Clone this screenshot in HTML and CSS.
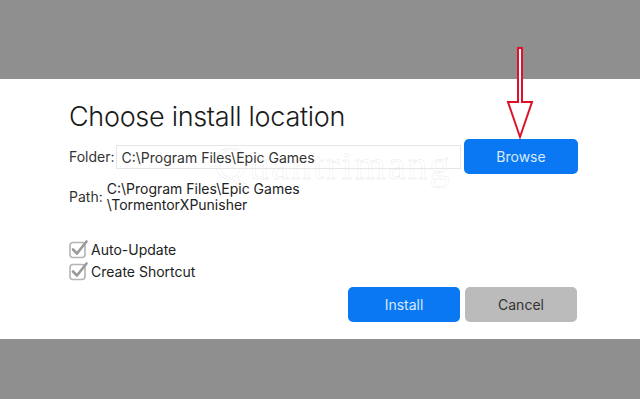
FILE: index.html
```html
<!DOCTYPE html>
<html lang="en">
<head>
  <meta charset="UTF-8">
  <meta name="viewport" content="width=device-width, initial-scale=1.0">
  <title>Choose install location</title>
  <link rel="stylesheet" href="styles.css">
</head>
<body>
  <div class="band top"></div>
  <section class="dialog">
    <h1>Choose install location</h1>
    <div class="row folder">
      <span class="label">Folder:</span>
      <div class="field">C:\Program Files\Epic Games</div>
      <button class="btn primary browse">Browse</button>
    </div>
    <div class="row path">
      <span class="label">Path:</span>
      <div class="value">
        <div>C:\Program Files\Epic Games</div>
        <div>\TormentorXPunisher</div>
      </div>
    </div>
    <ul class="options">
      <li>
        <svg class="check" width="20" height="20" viewBox="0 0 20 20">
          <rect x="1" y="3.5" width="15" height="15" rx="3" fill="none" stroke="#b4b4b4" stroke-width="1.6"/>
          <path d="M4 10.5 L8 14.5 L17.5 2.5" fill="none" stroke="#9a9a9a" stroke-width="2.6" stroke-linecap="round" stroke-linejoin="round"/>
        </svg>
        Auto-Update
      </li>
      <li>
        <svg class="check" width="20" height="20" viewBox="0 0 20 20">
          <rect x="1" y="3.5" width="15" height="15" rx="3" fill="none" stroke="#b4b4b4" stroke-width="1.6"/>
          <path d="M4 10.5 L8 14.5 L17.5 2.5" fill="none" stroke="#9a9a9a" stroke-width="2.6" stroke-linecap="round" stroke-linejoin="round"/>
        </svg>
        Create Shortcut
      </li>
    </ul>
    <div class="actions">
      <button class="btn primary">Install</button>
      <button class="btn cancel">Cancel</button>
    </div>
    <div class="watermark"><span class="mark">Q</span>uantrimang</div>
  </section>
  <div class="band bottom"></div>

  <svg class="arrow" width="30" height="96" viewBox="0 0 30 96">
    <path d="M13 1 L17 1 L17 55 L27 55 L15 90 L3 55 L13 55 Z" fill="#fff" stroke="#e0102a" stroke-width="2" stroke-linejoin="miter"/>
  </svg>
</body>
</html>
```
FILE: styles.css
```css
body {
  margin: 0;
  background: #8f8f8f;
  font-family: "Inter", "Liberation Sans", sans-serif;
  color: #222;
  position: relative;
}
.band.top {
  height: 79px;
}
.band.bottom {
  height: 60px;
}
.dialog {
  position: relative;
  background: #fff;
  height: 260px;
  box-sizing: border-box;
  padding: 21px 62px 0 69px;
  display: flex;
  flex-direction: column;
}
h1 {
  margin: 0;
  font-size: 27px;
  line-height: 34px;
  font-weight: 300;
  letter-spacing: -0.3px;
  color: #1a1a1a;
}
.row {
  display: flex;
  align-items: center;
  font-size: 14px;
}
.label {
  color: #333;
}
.folder {
  margin-top: 5px;
  height: 35px;
}
.field {
  width: 345px;
  height: 24px;
  line-height: 24px;
  margin-left: 1px;
  padding-left: 5px;
  box-sizing: border-box;
  border: 1px solid #e6e6e6;
  color: #333;
  position: relative;
  z-index: 1;
}
.btn {
  font-family: inherit;
  font-size: 14px;
  border: none;
  border-radius: 5px;
  width: 112px;
  height: 35px;
  padding: 0;
}
.primary {
  background: #0a78f2;
  color: #d8eaff;
}
.cancel {
  background: #bbbbbb;
  color: #333;
}
.browse {
  margin-left: auto;
  width: 114px;
}
.path {
  margin-top: 7px;
  line-height: 16px;
}
.path .value {
  margin-left: 4px;
}
.options {
  list-style: none;
  margin: 25px 0 0;
  padding: 0;
  font-size: 14px;
}
.options li {
  display: flex;
  align-items: center;
  height: 22px;
}
.check {
  margin-right: 2px;
  flex-shrink: 0;
}
.actions {
  display: flex;
  justify-content: flex-end;
  gap: 5px;
  margin-top: 5px;
  margin-right: 1px;
}
.watermark {
  position: absolute;
  left: 214px;
  top: 58px;
  font-family: "Liberation Serif", serif;
  font-size: 40px;
  color: transparent;
  -webkit-text-stroke: 1px rgba(0, 0, 0, 0.07);
  letter-spacing: 2px;
  pointer-events: none;
}
.watermark .mark {
  font-size: 46px;
}
.arrow {
  position: absolute;
  left: 505px;
  top: 47px;
}
```
